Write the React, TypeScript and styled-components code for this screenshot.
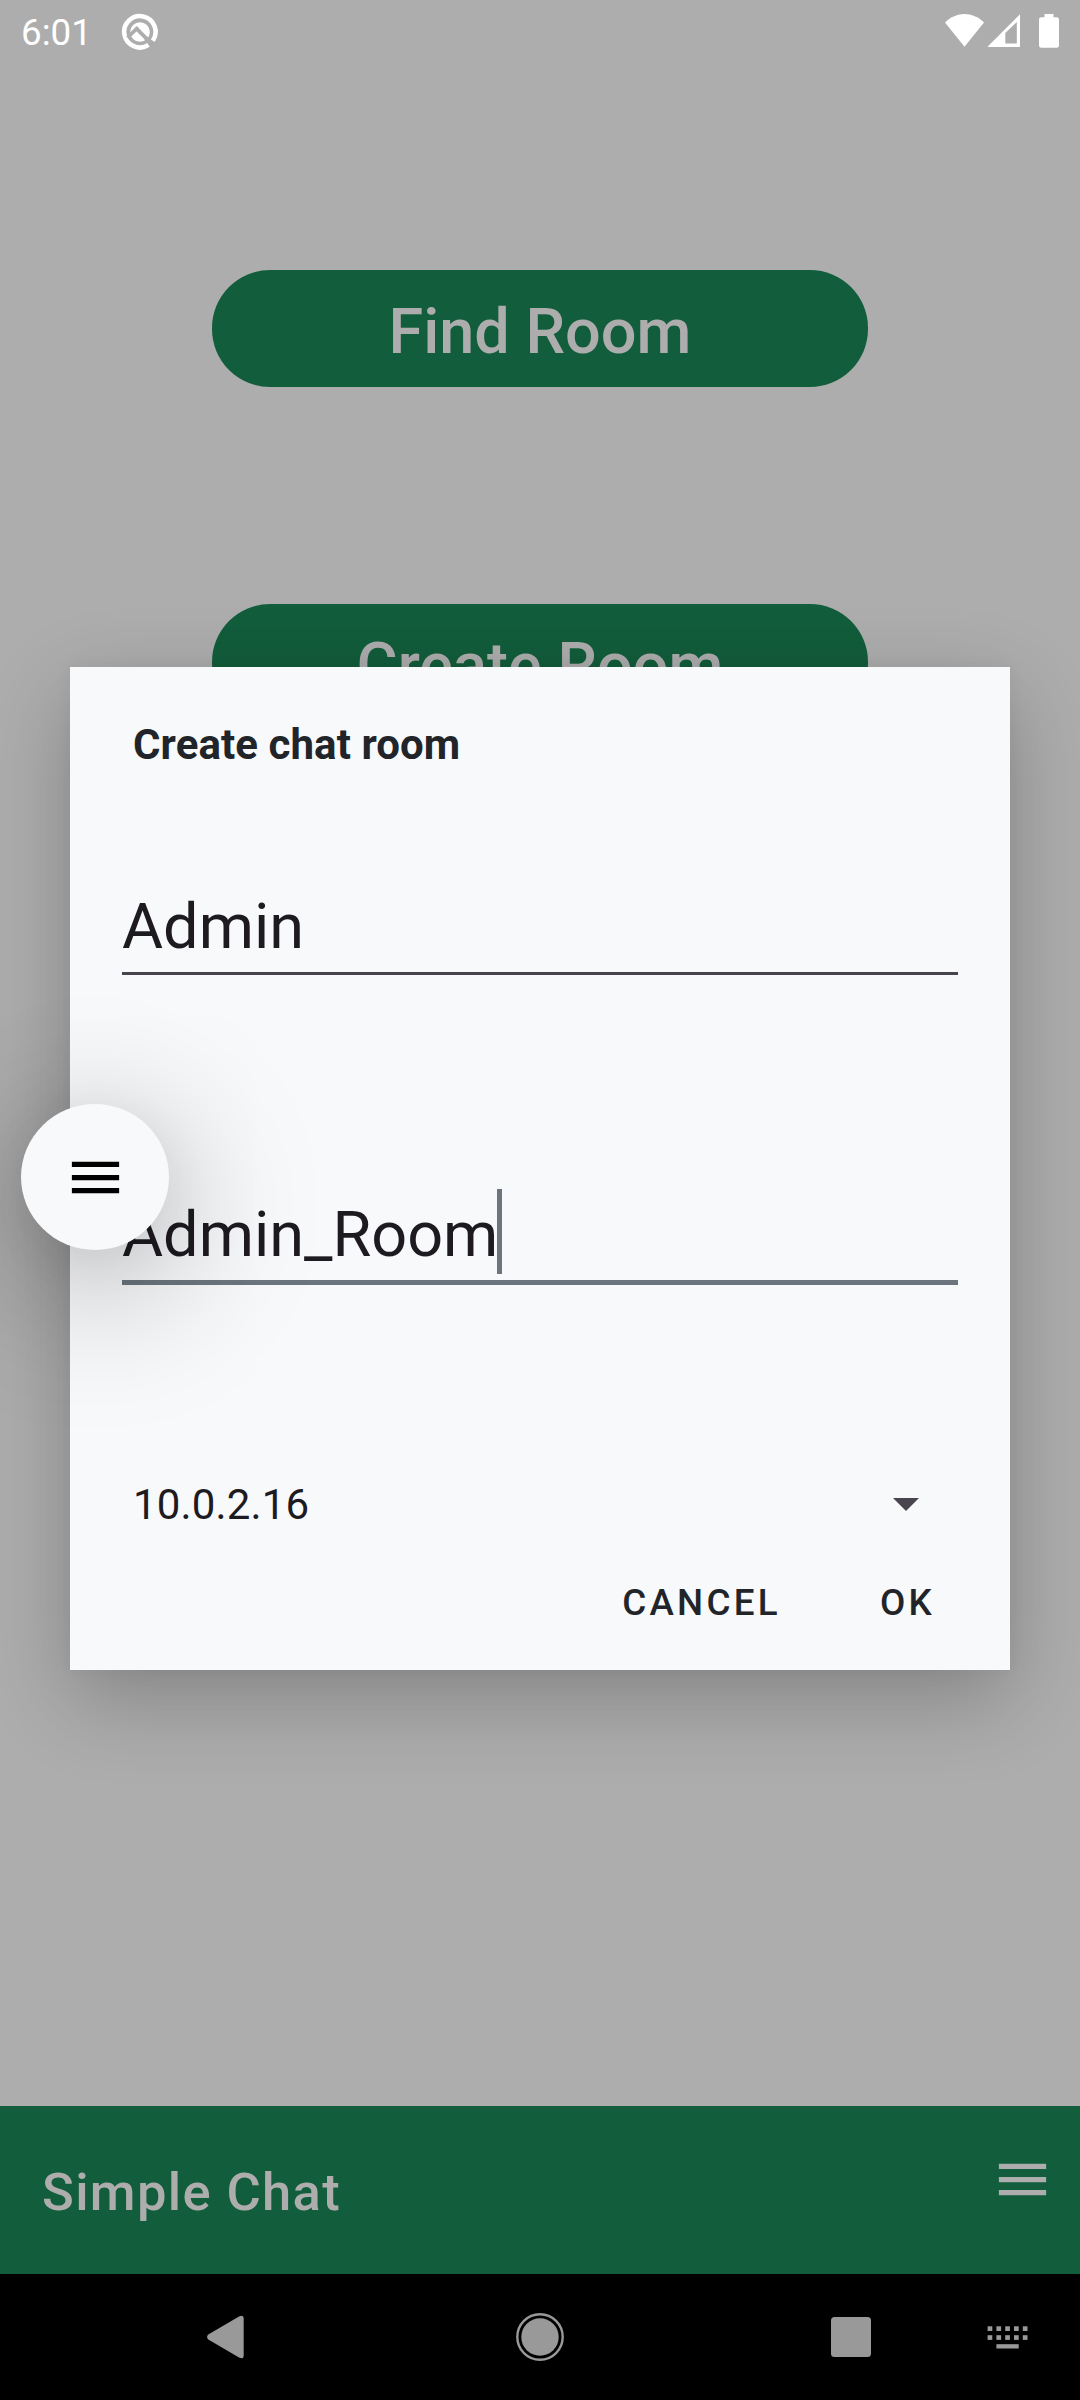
import React from "react";
import styled, { createGlobalStyle } from "styled-components";

const GlobalStyle = createGlobalStyle`
  * { box-sizing: border-box; }
  body { margin: 0; background: #adadad; font-family: Roboto, "Noto Sans", sans-serif; }
`;

const Screen = styled.div`
  position: relative;
  width: 1080px;
  height: 2400px;
  overflow: hidden;
  display: flex;
  flex-direction: column;
  background: #adadad;
`;

const StatusBar = styled.header`
  height: 63px;
  flex: none;
  display: flex;
  align-items: flex-start;
  justify-content: space-between;
  padding: 11px 20px 0 21px;
  color: #fff;
`;

const StatusGroup = styled.div`
  display: flex;
  align-items: center;
`;

const Clock = styled.span`
  font-size: 36.75px;
  line-height: 44px;
  width: 100px;
`;

const Icon = styled.svg`
  display: block;
  flex: none;
`;

const DebugGlyph = styled(Icon)`
  margin-bottom: 3px;
`;

const Content = styled.main`
  flex: 1;
  display: flex;
  flex-direction: column;
  align-items: center;
  gap: 217px;
  padding-top: 207px;
`;

const PillButton = styled.button`
  width: 656px;
  height: 117px;
  flex: none;
  border: 0;
  border-radius: 58px;
  padding: 7px 0 0;
  background: #125d3b;
  color: #adadad;
  font: 500 63px/74px Roboto, sans-serif;
`;

const AppBar = styled.nav`
  height: 168px;
  flex: none;
  display: flex;
  align-items: flex-start;
  justify-content: space-between;
  padding: 42px 26px 0 42px;
  background: #125d3b;
  color: #adadad;
`;

const AppTitle = styled.h1`
  margin: 13px 0 0;
  font-size: 52.5px;
  font-weight: 500;
  line-height: 62px;
  letter-spacing: 1.35px;
`;

const SystemNav = styled.footer`
  height: 126px;
  flex: none;
  background: #000;
`;

const Dialog = styled.section`
  position: absolute;
  left: 70px;
  top: 667px;
  width: 940px;
  height: 1003px;
  display: flex;
  flex-direction: column;
  padding: 53px 52px 0;
  background: #f8f9fb;
  color: #212529;
  box-shadow: 0 28px 80px rgba(0, 0, 0, 0.24), 0 0 16px rgba(0, 0, 0, 0.04);
`;

const DialogTitle = styled.h2`
  margin: 0;
  padding-left: 11px;
  font-size: 42px;
  font-weight: 700;
  line-height: 50px;
  letter-spacing: 0.08px;
`;

const Field = styled.div<{ $focused?: boolean }>`
  display: flex;
  align-items: flex-start;
  height: ${(p) => (p.$focused ? 96 : 94)}px;
  margin-top: ${(p) => (p.$focused ? 214 : 111)}px;
  border-bottom: ${(p) => (p.$focused ? "5px solid #6c757d" : "3px solid #49454f")};
  color: #1d1b20;
`;

const FieldText = styled.span`
  padding-top: 9px;
  font-size: 63px;
  line-height: 74px;
`;

const Caret = styled.i`
  width: 5px;
  height: 85px;
  margin-left: -1px;
  background: #6c757d;
`;

const Spinner = styled.div`
  display: flex;
  align-items: center;
  justify-content: space-between;
  height: 50px;
  margin-top: 195px;
  padding: 0 39px 0 11px;
  color: #1d1b20;
  font-size: 42px;
  line-height: 50px;
  letter-spacing: 0.15px;
`;

const SpinnerArrow = styled(Icon)`
  margin-bottom: 2px;
`;

const Actions = styled.div`
  display: flex;
  justify-content: flex-end;
  gap: 99px;
  margin-top: 51px;
  padding-right: 23px;
`;

const TextButton = styled.button`
  border: 0;
  padding: 0;
  background: none;
  color: #212529;
  font: 500 36.75px/44px Roboto, sans-serif;
  letter-spacing: 3.28px;
`;

const FloatingButton = styled.button`
  position: absolute;
  left: 21px;
  top: 1104px;
  width: 148px;
  height: 146px;
  display: flex;
  align-items: center;
  justify-content: center;
  border: 0;
  border-radius: 50%;
  padding: 1px 0 0;
  background: #f8f9fb;
  color: #000;
  box-shadow: 0 30px 140px 15px rgba(0, 0, 0, 0.25), 0 12px 50px rgba(0, 0, 0, 0.06);
`;

const MenuIcon = () => (
  <Icon width="63" height="63" viewBox="0 0 24 24" fill="currentColor">
    <path d="M3 18h18v-2H3v2zm0-5h18v-2H3v2zm0-7v2h18V6H3z" />
  </Icon>
);

const DebugIcon = () => (
  <DebugGlyph width="38" height="38" viewBox="0 0 38 38" fill="none">
    <path d="M27.5 31.9A15.7 15.7 0 1 1 31.8 27.7" stroke="#fff" strokeWidth="4.6" />
    <circle cx="19" cy="19" r="9.8" fill="#fff" />
    <path d="M6.5 24.5 15.8 15.6 19.5 19.6 31 31" stroke="#adadad" strokeWidth="3.8" />
    <path d="m24.5 25.5 9 9" stroke="#adadad" strokeWidth="3.4" />
  </DebugGlyph>
);

const SignalIcons = () => (
  <Icon width="120" height="38" viewBox="940 11 120 38" fill="#fff">
    <path d="M945 22.5C956.500 11 972.500 11 984 22.500L964.500 46.800Z" />
    <path fillRule="evenodd" d="M987.300 47H1020V14.300ZM1005.300 43.500V33L1016.800 22V43.500Z" />
    <path d="M1044.500 14h9v3.300h3.200q2.300 0 2.300 2.300v25.800q0 2.300-2.300 2.300h-15.400q-2.300 0-2.300-2.300V19.600q0-2.300 2.300-2.300h3.200z" />
  </Icon>
);

const NavIcons = () => (
  <Icon width="1080" height="126" viewBox="0 2274 1080 126" fill="#999">
    <path d="M208.300 2334.500 239 2316.600Q243.700 2314.300 243.700 2318.500V2355.500Q243.700 2359.700 239 2357.400L208.300 2339.500Q205.800 2337 208.300 2334.500Z" />
    <circle cx="540" cy="2337" r="18.700" />
    <circle cx="540" cy="2337" r="22.700" fill="none" stroke="#999" strokeWidth="2.400" />
    <rect x="831" y="2317" width="40" height="40" rx="3.500" />
    {[987.6, 996.4, 1005.2, 1014, 1022.8].map((x) => (
      <React.Fragment key={x}>
        <rect x={x} y="2326.300" width="4.700" height="4.700" />
        <rect x={x} y="2335.200" width="4.700" height="4.700" />
      </React.Fragment>
    ))}
    <rect x="996.400" y="2344.200" width="22.300" height="4.300" />
  </Icon>
);

export default function App() {
  return (
    <>
      <GlobalStyle />
      <Screen>
        <StatusBar>
          <StatusGroup>
            <Clock>6:01</Clock>
            <DebugIcon />
          </StatusGroup>
          <SignalIcons />
        </StatusBar>
        <Content>
          <PillButton>Find Room</PillButton>
          <PillButton>Create Room</PillButton>
        </Content>
        <AppBar>
          <AppTitle>Simple Chat</AppTitle>
          <MenuIcon />
        </AppBar>
        <SystemNav>
          <NavIcons />
        </SystemNav>
        <Dialog>
          <DialogTitle>Create chat room</DialogTitle>
          <Field>
            <FieldText>Admin</FieldText>
          </Field>
          <Field $focused>
            <FieldText>Admin_Room</FieldText>
            <Caret />
          </Field>
          <Spinner>
            10.0.2.16
            <SpinnerArrow width="26" height="13" viewBox="0 0 26 13" fill="#49454f">
              <path d="M0 0h26L13 13z" />
            </SpinnerArrow>
          </Spinner>
          <Actions>
            <TextButton>CANCEL</TextButton>
            <TextButton>OK</TextButton>
          </Actions>
        </Dialog>
        <FloatingButton>
          <MenuIcon />
        </FloatingButton>
      </Screen>
    </>
  );
}
